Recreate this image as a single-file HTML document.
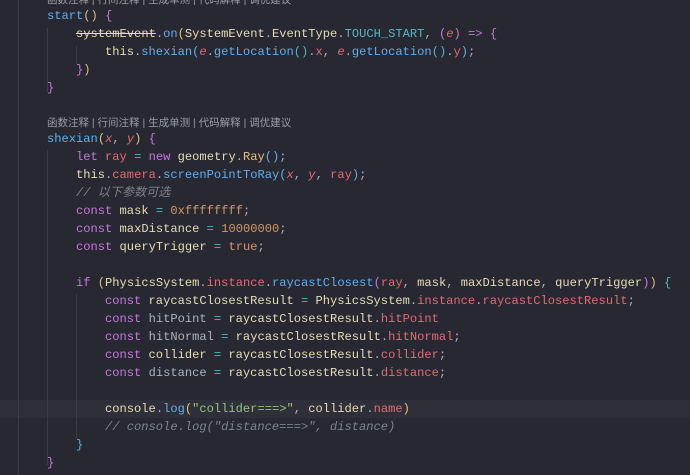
<!DOCTYPE html>
<html><head><meta charset="utf-8"><style>
html,body{margin:0;padding:0;}
body{width:690px;height:475px;background:#272831;overflow:hidden;position:relative;font-family:"Liberation Mono","Noto Sans CJK SC",monospace;font-size:12.1px;color:#e6dcb8;}
.l{position:absolute;left:0;white-space:pre;height:18px;line-height:18px;}
.g{position:absolute;width:1px;background:#3a3c46;}
.cl{position:absolute;left:47px;font-family:"Liberation Sans","Noto Sans CJK SC",sans-serif;font-size:10.5px;color:#9a9ca4;white-space:pre;}
.k{color:#c678dd}.f{color:#61afef}.v{color:#e06c75}.s{color:#98c379}.n{color:#d19a66}.c{color:#7f848e;font-style:italic}.o{color:#56b6c2}.p{color:#abb2bf}.y{color:#e5c07b}.b{color:#c678dd}
.i{font-style:italic}
</style></head><body>
<div style="position:absolute;left:0;top:400px;width:690px;height:18px;background:#2e2f39"></div>
<div class="g" style="left:18px;top:0;height:475px"></div>
<div class="g" style="left:47px;top:28px;height:64px"></div>
<div class="g" style="left:47px;top:150px;height:315px"></div>
<div class="g" style="left:76px;top:46px;height:18px"></div>
<div class="g" style="left:76px;top:294px;height:144px"></div>
<div class="cl" style="top:-8px">函数注释 | 行间注释 | 生成单测 | 代码解释 | 调优建议</div>
<div class="l" style="top:7px;left:47px"><span class="f">start</span><span class="y">()</span> <span class="b">{</span></div>
<div class="l" style="top:25px;left:76px"><span style="text-decoration:line-through">systemEvent</span><span class="p">.</span><span class="f">on</span><span class="y">(</span>SystemEvent<span class="p">.</span>EventType<span class="p">.</span><span class="o">TOUCH_START</span><span class="p">,</span> <span class="b">(</span><span class="v i">e</span><span class="b">)</span> <span class="k">=&gt;</span> <span class="b">{</span></div>
<div class="l" style="top:43px;left:105px">this<span class="p">.</span><span class="f">shexian</span><span class="f">(</span><span class="v i">e</span><span class="p">.</span><span class="f">getLocation</span><span class="o">()</span><span class="p">.</span><span class="v">x</span><span class="p">,</span> <span class="v i">e</span><span class="p">.</span><span class="f">getLocation</span><span class="o">()</span><span class="p">.</span><span class="v">y</span><span class="f">)</span><span class="p">;</span></div>
<div class="l" style="top:61px;left:76px"><span class="b">}</span><span class="y">)</span></div>
<div class="l" style="top:79px;left:47px"><span class="b">}</span></div>
<div class="cl" style="top:115px">函数注释 | 行间注释 | 生成单测 | 代码解释 | 调优建议</div>
<div class="l" style="top:130px;left:47px"><span class="f">shexian</span><span class="y">(</span><span class="v i">x</span><span class="p">,</span> <span class="v i">y</span><span class="y">)</span> <span class="b">{</span></div>
<div class="l" style="top:148px;left:76px"><span class="k">let</span> <span class="v">ray</span> <span class="o">=</span> <span class="k">new</span> geometry<span class="p">.</span><span class="y">Ray</span><span class="f">()</span><span class="p">;</span></div>
<div class="l" style="top:166px;left:76px">this<span class="p">.</span><span class="v">camera</span><span class="p">.</span><span class="f">screenPointToRay</span><span class="f">(</span><span class="v i">x</span><span class="p">,</span> <span class="v i">y</span><span class="p">,</span> <span class="v">ray</span><span class="f">)</span><span class="p">;</span></div>
<div class="l c" style="top:184px;left:76px">// 以下参数可选</div>
<div class="l" style="top:202px;left:76px"><span class="k">const</span> mask <span class="o">=</span> <span class="n">0xffffffff</span><span class="p">;</span></div>
<div class="l" style="top:220px;left:76px"><span class="k">const</span> maxDistance <span class="o">=</span> <span class="n">10000000</span><span class="p">;</span></div>
<div class="l" style="top:238px;left:76px"><span class="k">const</span> queryTrigger <span class="o">=</span> <span class="n">true</span><span class="p">;</span></div>
<div class="l" style="top:274px;left:76px"><span class="k">if</span> <span class="y">(</span>PhysicsSystem<span class="p">.</span><span class="v">instance</span><span class="p">.</span><span class="f">raycastClosest</span><span class="b">(</span><span class="v">ray</span><span class="p">,</span> mask<span class="p">,</span> maxDistance<span class="p">,</span> queryTrigger<span class="b">)</span><span class="y">)</span> <span class="o">{</span></div>
<div class="l" style="top:292px;left:105px"><span class="k">const</span> raycastClosestResult <span class="o">=</span> PhysicsSystem<span class="p">.</span><span class="v">instance</span><span class="p">.</span><span class="v">raycastClosestResult</span><span class="p">;</span></div>
<div class="l" style="top:310px;left:105px"><span class="k">const</span> <span class="p">hitPoint</span> <span class="o">=</span> raycastClosestResult<span class="p">.</span><span class="v">hitPoint</span></div>
<div class="l" style="top:328px;left:105px"><span class="k">const</span> <span class="p">hitNormal</span> <span class="o">=</span> raycastClosestResult<span class="p">.</span><span class="v">hitNormal</span><span class="p">;</span></div>
<div class="l" style="top:346px;left:105px"><span class="k">const</span> collider <span class="o">=</span> raycastClosestResult<span class="p">.</span><span class="v">collider</span><span class="p">;</span></div>
<div class="l" style="top:364px;left:105px"><span class="k">const</span> <span class="p">distance</span> <span class="o">=</span> raycastClosestResult<span class="p">.</span><span class="v">distance</span><span class="p">;</span></div>
<div class="l" style="top:400px;left:105px">console<span class="p">.</span><span class="f">log</span><span class="y">(</span><span class="s">"collider===&gt;"</span><span class="p">,</span> collider<span class="p">.</span><span class="v">name</span><span class="y">)</span></div>
<div class="l c" style="top:418px;left:105px">// console.log("distance===&gt;", distance)</div>
<div class="l" style="top:436px;left:76px"><span class="o">}</span></div>
<div class="l" style="top:454px;left:47px"><span class="b">}</span></div>
</body></html>
